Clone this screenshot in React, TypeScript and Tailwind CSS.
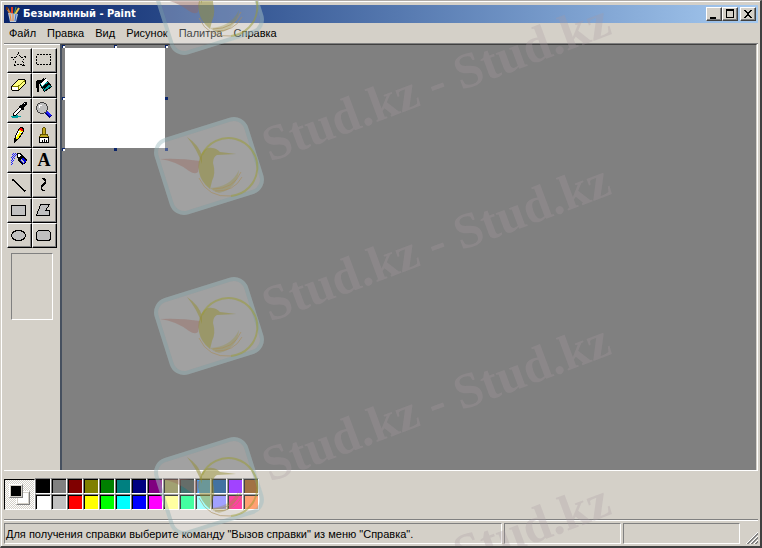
import type { ReactNode } from "react"

const MENUS = ["Файл", "Правка", "Вид", "Рисунок", "Палитра", "Справка"]

const TOP_COLORS = [
  "bg-[#000000]", "bg-[#808080]", "bg-[#800000]", "bg-[#808000]", "bg-[#008000]", "bg-[#008080]", "bg-[#000080]",
  "bg-[#800080]", "bg-[#808040]", "bg-[#004040]", "bg-[#0080ff]", "bg-[#004080]", "bg-[#8000ff]", "bg-[#804000]",
]
const BOTTOM_COLORS = [
  "bg-[#ffffff]", "bg-[#c0c0c0]", "bg-[#ff0000]", "bg-[#ffff00]", "bg-[#00ff00]", "bg-[#00ffff]", "bg-[#0000ff]",
  "bg-[#ff00ff]", "bg-[#ffff80]", "bg-[#00ff80]", "bg-[#80ffff]", "bg-[#8080ff]", "bg-[#ff0080]", "bg-[#ff8040]",
]

const TOOLS: { name: string; icon: ReactNode }[] = [
  {
    name: "Выделение произвольной области",
    icon: <path d="M7.5 .5 9.5 5.5 15.5 4.5 11.5 8.5 13.5 14.5 8.5 11.5 3.5 14.5 4.5 9.5 .5 5.5 5.5 5.5Z" fill="none" stroke="#000" strokeDasharray="2 1" />,
  },
  {
    name: "Выделение",
    icon: <path d="M.5 2.5h14v10H.5z" fill="none" stroke="#000" strokeDasharray="2 1" />,
  },
  {
    name: "Ластик",
    icon: (
      <>
        <path d="M7.5 2.5h6l1 1v3l-7 7h-6l-1-1v-3z" fill="#ffff80" stroke="#000" />
        <path d="M1 10h6v3H2l-1-1z" fill="#fff" />
        <path d="M1 9.5h6l7-6M7.5 10v3" fill="none" stroke="#808000" />
      </>
    ),
  },
  {
    name: "Заливка",
    icon: (
      <>
        <path d="M3.5 6.5 9.5 1.5 15.5 9.5 8.5 14.5Z" fill="#00a0a0" stroke="#000" />
        <path d="M5 6 10 2l2 2-6 5z" fill="#fff" />
        <path d="M6 10 13 5l1 2-6 5z" fill="#000" />
        <path d="M0 6q0-3 3-3h4v1L5 6H3v9H1z" fill="#000" />
        <path d="M6.5 5V2.5l2-1" fill="none" stroke="#000" />
      </>
    ),
  },
  {
    name: "Выбор цветов",
    icon: (
      <>
        <path d="M0 14h2v-1h5v1h3v1H7v1H1v-1H0z" fill="#00a0a0" />
        <path d="M9 3h2l2-3h2l1 1v2l-3 2v3h-1L8 5V4z" fill="#000" />
        <path d="M8.5 5.5 2.5 11.5v2h2l6-6" fill="#fff" stroke="#000" />
        <path d="M13 1.5h1" stroke="#fff" />
      </>
    ),
  },
  {
    name: "Масштаб",
    icon: (
      <>
        <path d="m10 10 5 5" stroke="#000080" strokeWidth="4" />
        <path d="m10 9 5 5" stroke="#2020ff" strokeWidth="2" />
        <circle cx="6" cy="6" r="5.5" fill="#c0c0c0" stroke="#404040" />
        <path d="M3 6V4l1-1h2" fill="none" stroke="#fff" />
      </>
    ),
  },
  {
    name: "Карандаш",
    icon: (
      <>
        <path d="M4.5 9.5 8.5 1.5l2-1 2 1v3l-5 7-4 3z" fill="#ffff00" stroke="#000" />
        <path d="m9 1 3 1v2L8 3z" fill="#ff0000" />
        <path d="m7 4 4 2" stroke="#fff" />
        <path d="m3 11 3 2-3 3z" fill="#000" />
        <path d="m8 5-3 5" stroke="#fff" />
      </>
    ),
  },
  {
    name: "Кисть",
    icon: (
      <>
        <path d="M6.5 7V1.5l1-1h1l1 1V7z" fill="#c0a820" stroke="#605000" />
        <path d="M4.5 7.5h7l1 3h-9z" fill="#c0a820" stroke="#605000" />
        <path d="M3.5 10.5h9v5h-9z" fill="#fff" stroke="#000" />
        <path d="M6.5 13v2M8.5 12v3M10.5 13v2" stroke="#000" />
      </>
    ),
  },
  {
    name: "Распылитель",
    icon: (
      <>
        <path d="M1 2.5h6M1 4.5h4M1 6.5h3M0 8.5h3M0 10.5h2M0 12.5h1" stroke="#2020ff" strokeDasharray="1 1" />
        <path d="M2 1.5h4M2 3.5h4M0 5.5h4M1 7.5h2M1 9.5h1M1 11.5h1" stroke="#2020ff" strokeDasharray="1 1" />
        <path d="m7 6 4-4 5 6-1 3-4 2-4-5z" fill="#000" />
        <path d="m9 8 3-3 3 4-3 3z" fill="#0000e0" />
        <path d="M6.5 4.5v-3h3l1 2-3 3z" fill="#fff" stroke="#000" />
        <path d="m10 7 3 4" stroke="#c0c0c0" />
      </>
    ),
  },
  {
    name: "Надпись",
    icon: <text x="8" y="14" textAnchor="middle" fontFamily="Liberation Serif, serif" fontSize="18" fontWeight="bold">A</text>,
  },
  { name: "Линия", icon: <path d="m1.5 2.5 13 12" stroke="#000" strokeWidth="1.5" /> },
  { name: "Кривая", icon: <path d="M5.5 1.5h2l2 2v2l-4 4v2l1 2h2" fill="none" stroke="#000" strokeWidth="1.5" /> },
  { name: "Прямоугольник", icon: <path d="M.5 3.5h14v10H.5z" fill="#c0c0c0" stroke="#000" /> },
  { name: "Многоугольник", icon: <path d="M4.5 2.5h9l-4 6h4v5H.5z" fill="#c0c0c0" stroke="#000" /> },
  { name: "Эллипс", icon: <ellipse cx="7.5" cy="8.5" rx="7" ry="5" fill="#c0c0c0" stroke="#000" /> },
  { name: "Скругленный прямоугольник", icon: <rect x=".5" y="3.5" width="14" height="10" rx="3" fill="#c0c0c0" stroke="#000" /> },
]

function PaintLogo() {
  return (
    <svg className="size-4 shrink-0" viewBox="0 0 16 16" aria-hidden="true">
      <path d="m2 2 4 7" stroke="#c47a3a" strokeWidth="2" />
      <path d="M7 1v8" stroke="#e04020" strokeWidth="2" />
      <path d="m14 2-5 8" stroke="#f0c040" strokeWidth="2" />
      <path d="m11 1-2 8" stroke="#40a060" />
      <path d="M1 1h2v3H1z" fill="#6a3010" />
      <path d="m3 7 10 1-2 8H5z" fill="#b8c8d8" />
      <path d="m5 8 1 7M8 8v7" stroke="#f08030" />
      <path d="m11 8-1 7" stroke="#4070d0" />
    </svg>
  )
}

function WindowButton({ label, children }: { label: string; children: ReactNode }) {
  return (
    <button
      aria-label={label}
      className="flex h-3.5 w-4 items-center justify-center border border-t-white border-r-[#404040] border-b-[#404040] border-l-white bg-[#d4d0c8] shadow-[inset_-1px_-1px_#808080]"
    >
      <svg className="h-2.5 w-3 shrink-0" viewBox="0 0 12 10" shapeRendering="crispEdges">
        {children}
      </svg>
    </button>
  )
}

function Swatches({ colors }: { colors: string[] }) {
  return (
    <div className="flex">
      {colors.map((color) => (
        <button
          key={color}
          aria-label="Цвет"
          className="h-4 w-4 border border-t-[#808080] border-r-white border-b-white border-l-[#808080]"
        >
          <span className={`block size-full border-t border-l border-black ${color}`} />
        </button>
      ))}
    </div>
  )
}

function Handle({ place }: { place: string }) {
  return <span className={`absolute size-[3px] ${place}`} />
}

/* Hummingbird badge, drawn round its own centre */
function Badge({ y }: { y: number }) {
  return (
    <g transform={`translate(208 ${y})`}>
      <g transform="rotate(-17.5)">
        <rect x="-49" y="-40" width="98" height="80" rx="15" fill="#fff" fillOpacity=".1" />
        <rect x="-47" y="-38" width="94" height="76" rx="13" fill="none" stroke="#98b8bc" strokeWidth="4" strokeOpacity=".45" />
        <rect x="-45" y="-36" width="90" height="72" rx="11" fill="#fff" fillOpacity=".18" />
      </g>
      <g fill="#948d32" fillOpacity=".5">
        <path d="M-22-29Q-10-21-7-10V-2Q-12-17-22-29Z" />
        <path d="M-49-7Q-29-8-9-5L-11 6Q-14 9-20 5-33-5-49-7Z" fill="#98665c" fillOpacity=".4" />
        <path d="M-7-13Q-3-19 3-18 7-18 11-14L27-12 8-11Q4-9 4-3 7 7 3 15L1 23Q-8 16-10 6-12-4-7-13Z" />
        <path d="M1 22Q22 21 30 4 28 23 10 27 5 26 1 22Z" fillOpacity=".3" />
      </g>
      <path d="M-7-11A29 29 0 1 1 22 30" fill="none" stroke="#9a9c30" strokeWidth="2" strokeOpacity=".5" />
      <path d="M22 30Q-1 32-10 12M4 23Q25 23 32 6M6 25Q25 26 33 11" fill="none" stroke="#a88c58" strokeOpacity=".6" />
    </g>
  )
}

function Watermark() {
  return (
    <svg className="pointer-events-none absolute inset-0 size-full" aria-hidden="true">
      {[5, 165, 325, 485].map((y) => (
        <Badge key={y} y={y} />
      ))}
      {[161, 321, 481, 641].map((y) => (
        <text
          key={y}
          transform={`translate(269 ${y}) rotate(-20.5)`}
          fontFamily="Liberation Serif, serif"
          fontSize="50"
          fontWeight="bold"
          fill="#a89ca2"
          fillOpacity=".28"
        >
          Stud.kz - Stud.kz
        </text>
      ))}
    </svg>
  )
}

export default function App() {
  return (
    <div className="relative flex h-screen flex-col overflow-hidden border-t border-r-2 border-b-2 border-l border-t-[#b0aca8] border-r-[#404040] border-b-[#404040] border-l-[#d4d0c8] bg-[#d4d0c8] font-['Liberation_Sans',Tahoma,sans-serif] text-[11px] text-black">
      <div className="flex min-h-0 flex-1 flex-col border-t border-l border-white px-0.5 pt-[3px]">
        <header className="flex h-[18px] shrink-0 items-center bg-linear-to-r from-[#0a246a] to-[#a6caf0] pr-0.5 pl-px">
          <PaintLogo />
          <h1 className="ml-0.5 flex-1 font-['DejaVu_Sans_Condensed',Tahoma,sans-serif] text-[11px] leading-[18px] font-bold text-white">
            Безымянный - Paint
          </h1>
          <WindowButton label="Свернуть">
            <path d="M2 8h6v2H2z" />
          </WindowButton>
          <WindowButton label="Развернуть">
            <path d="M2 1.5h8M2.5 1v8M9.5 1v8M2 8.5h8M2 .5h8" fill="none" stroke="#000" />
          </WindowButton>
          <div className="ml-0.5 flex">
            <WindowButton label="Закрыть">
              <path d="M2 1h2v1h1v1h2V2h1V1h2v1H9v1H8v1H7v2h1v1h1v1h1v1H8V8H7V7H5v1H4v1H2V8h1V7h1V6h1V4H4V3H3V2H2z" />
            </WindowButton>
          </div>
        </header>

        <nav className="flex h-5 shrink-0 items-center gap-px">
          {MENUS.map((menu) => (
            <button key={menu} className="px-[5px] leading-5">
              {menu}
            </button>
          ))}
        </nav>

        <main className="flex min-h-0 flex-1 border-t border-b border-t-[#808080] border-b-white">
          <aside className="w-14 shrink-0 border-t border-white pt-[3px] pl-[3px]">
            <div className="grid w-[50px] grid-cols-2">
              {TOOLS.map(({ name, icon }) => (
                <button
                  key={name}
                  aria-label={name}
                  className="flex size-[25px] items-center justify-center border-t border-r border-b border-l border-t-white border-r-black border-b-black border-l-white pr-px pb-px shadow-[inset_-1px_-1px_#808080]"
                >
                  <svg className="size-4 shrink-0" viewBox="0 0 16 16" shapeRendering="crispEdges">
                    {icon}
                  </svg>
                </button>
              ))}
            </div>
            <div className="mt-[5px] ml-1 h-[67px] w-[42px] border border-t-[#808080] border-r-white border-b-white border-l-[#808080]" />
          </aside>

          <div className="min-w-0 flex-1 border-t border-r border-l-2 border-t-[#404040] border-r-[#d4d0c8] border-l-[#46505f] bg-[#808080] pt-[3px] pl-[3px]">
            <div className="relative size-[100px] bg-white">
              <Handle place="-top-[3px] -left-[3px] border-t border-l border-[#0a246a] bg-white" />
              <Handle place="-top-[3px] left-[49px] border-t border-l border-[#0a246a] bg-white" />
              <Handle place="-top-[3px] -right-[3px] border-t border-l border-[#0a246a] bg-white" />
              <Handle place="top-[49px] -left-[3px] border-t border-l border-[#0a246a] bg-white" />
              <Handle place="-bottom-[3px] -left-[3px] border-t border-l border-[#0a246a] bg-white" />
              <Handle place="top-[49px] -right-[3px] bg-[#0a246a]" />
              <Handle place="-bottom-[3px] left-[49px] bg-[#0a246a]" />
              <Handle place="-right-[3px] -bottom-[3px] bg-[#0a246a]" />
            </div>
          </div>
          <div className="w-px bg-white" />
        </main>

        <section className="flex h-12 shrink-0 items-center pb-0.5" aria-label="Палитра">
          <div className="flex size-[31px] border border-t-black border-r-white border-b-white border-l-black bg-[repeating-conic-gradient(#fff_0_25%,#d4d0c8_0_50%)] bg-size-[2px_2px] pt-1 pl-1">
            <div className="relative size-3.5">
              <span className="absolute top-[7px] left-[7px] size-3.5 border border-t-white border-r-[#808080] border-b-[#808080] border-l-white bg-white shadow-[inset_0_0_0_1px_#d4d0c8]" />
              <span className="absolute inset-0 border border-t-white border-r-[#808080] border-b-[#808080] border-l-white bg-black shadow-[inset_0_0_0_1px_#d4d0c8]" />
            </div>
          </div>
          <div>
            <Swatches colors={TOP_COLORS} />
            <Swatches colors={BOTTOM_COLORS} />
          </div>
        </section>

        <footer className="flex h-[27px] shrink-0 gap-0.5 border-t border-[#808080] pt-[3px] pb-0.5 shadow-[inset_0_1px_#fff]">
          <p className="min-w-0 flex-1 truncate border border-t-[#808080] border-r-white border-b-white border-l-[#808080] px-px leading-5">
            Для получения справки выберите команду "Вызов справки" из меню "Справка".
          </p>
          <div className="w-[117px] border border-t-[#808080] border-r-white border-b-white border-l-[#808080]" />
          <div className="w-[117px] border border-t-[#808080] border-r-white border-b-white border-l-[#808080]" />
          <svg className="ml-1 size-3 self-end" viewBox="0 0 12 12" shapeRendering="crispEdges" aria-hidden="true">
            <path d="M0 12 12 0M4 12l8-8M8 12l4-4" stroke="#fff" />
            <path d="M1 12 12 1M2 12 12 2M5 12l7-7M6 12l6-6M9 12l3-3M10 12l2-2" stroke="#808080" />
          </svg>
        </footer>
      </div>
      <Watermark />
    </div>
  )
}
